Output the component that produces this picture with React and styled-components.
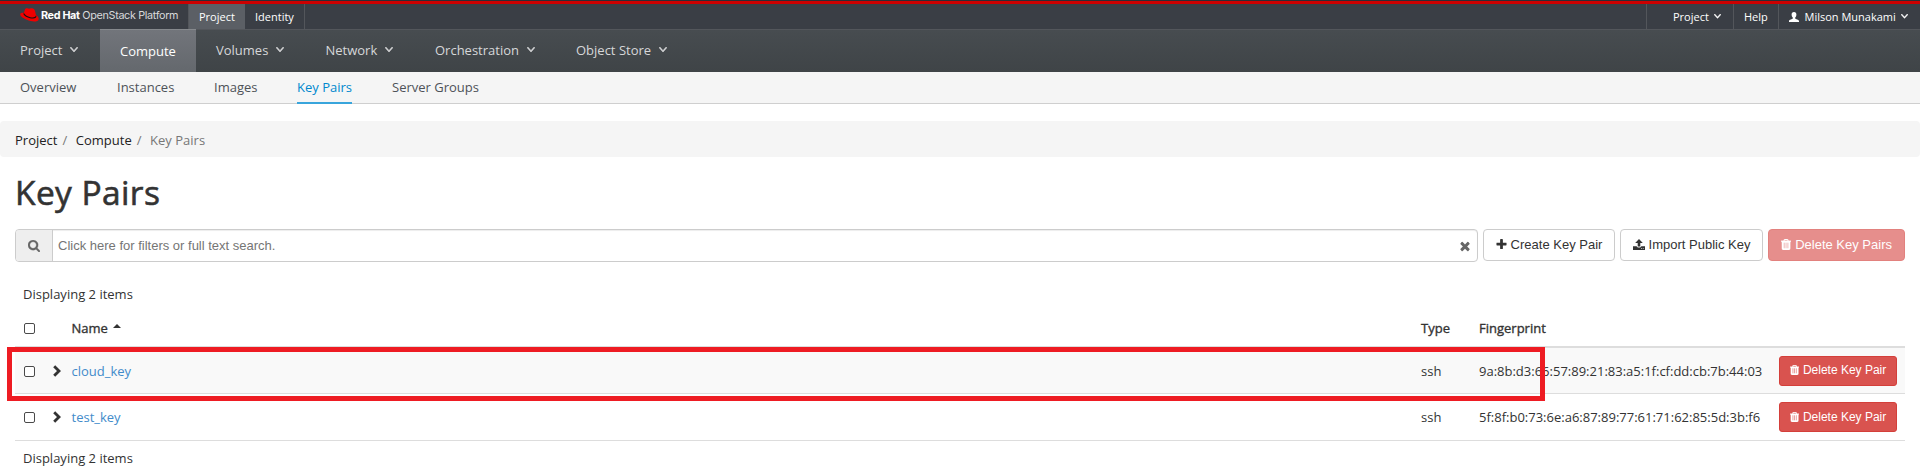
import React from "react";
import styled, { createGlobalStyle } from "styled-components";

const Global = createGlobalStyle`
  * { box-sizing: border-box; }
  body { margin: 0; background: #fff; color: #333; font: 13px/20px "Open Sans", "Noto Sans", sans-serif; overflow: hidden; }
`;

const Page = styled.div`position: relative; height: 473px; overflow: hidden;`;
const RedLine = styled.div`height: 4px; background: #cc0000; border-top: 1px solid #292e34;`;
const TopBar = styled.header`
  display: flex; height: 26px; background: #3a3e45;
  border-bottom: 1px solid #53565b; color: #fff; font-size: 11px;
`;
const Brand = styled.div`display: flex; width: 188px; padding: 4px 0 0 20px; color: #d8d9db;`;
const BrandText = styled.div`
  font: 400 10.8px/15px Inter, sans-serif; margin: 0 0 0 2px; white-space: nowrap; letter-spacing: -0.34px;
  b { font-weight: 700; color: #fff; }
`;
const TopItem = styled.div`
  display: flex; align-items: center; gap: ${(p) => p.$gap || 0}px; width: ${(p) => p.$w}px;
  padding: 0 0 0 ${(p) => p.$pad ?? 10}px; white-space: nowrap; height: 25px;
  background: ${(p) => (p.$active ? "#5b5f65" : "transparent")};
  border-left: ${(p) => (p.$left ? "1px solid #53565b" : "0")};
  border-right: ${(p) => (p.$right ? "1px solid #53565b" : "0")};
`;
const Spacer = styled.div`flex: 1;`;

const MainNav = styled.nav`
  display: flex; height: 42px; color: #d6d7d9;
  background: linear-gradient(#474c50, #3f4447);
`;
const NavItem = styled.div`
  display: flex; align-items: center; gap: 8px; width: ${(p) => p.$w}px; white-space: nowrap;
  padding: 0 0 ${(p) => (p.$active ? 1 : 2)}px 20px;
  color: ${(p) => (p.$active ? "#fff" : "inherit")};
  margin-top: ${(p) => (p.$active ? "-1px" : "0")};
  background: ${(p) => (p.$active ? "linear-gradient(#72757b, #64686d)" : "none")};
  border-top: ${(p) => (p.$active ? "1px solid #86898d" : "0")};
  height: ${(p) => (p.$active ? 43 : 42)}px;
`;
const SubNav = styled.nav`
  display: flex; gap: 40px; height: 32px; padding-left: 20px; background: #f5f5f5;
  border-bottom: 1px solid #cfcfcf; color: #4d5258;
`;
const SubItem = styled.div`
  height: 32px; padding-top: 5px; white-space: nowrap; width: ${(p) => p.$w}px;
  color: ${(p) => (p.$active ? "#0088ce" : "inherit")};
  border-bottom: ${(p) => (p.$active ? "2px solid #39a5dc" : "0")};
`;
const Crumbs = styled.div`
  display: flex; height: 36px; margin-top: 17px; padding: 10px 15px 0; border-radius: 4px;
  background: #f5f5f5; color: #222; line-height: 18px;
  span { color: #777; }
`;
const Slash = styled.span`width: 18.4px; padding-left: 5px;`;
const Title = styled.h1`
  margin: 16px 0 0 15px; font-size: 33.5px; font-weight: 400; line-height: 38px; height: 56px;
  letter-spacing: 0.4px; -webkit-text-stroke: 0.6px #333;
`;
const Toolbar = styled.div`display: flex; gap: 5px; padding: 0 15px; height: 33px;`;
const Search = styled.div`
  display: flex; width: 1463px; height: 33px; border: 1px solid #ccc; border-radius: 4px;
  box-shadow: inset 0 1px 1px rgba(0,0,0,.075); color: #757575; overflow: hidden;
  font: 13px/31px "Liberation Sans", sans-serif;
`;
const SearchIcon = styled.div`
  display: flex; align-items: center; justify-content: center; width: 37px; background: #eee; border-right: 1px solid #ccc; color: #666;
`;
const Placeholder = styled.div`flex: 1; padding-left: 5px;`;
const ClearBox = styled.div`display: flex; align-items: center; padding: 1px 6px 0 0; color: #666;`;
const Button = styled.div`
  display: flex; align-items: center; justify-content: center; gap: 4px;
  width: ${(p) => p.$w}px; height: ${(p) => p.$h || 32}px; border-radius: ${(p) => (p.$small ? 3 : 4)}px;
  padding-bottom: 1px; white-space: nowrap;
  font: ${(p) => (p.$small ? "12px" : "13px")}/18px "Liberation Sans", sans-serif;
  color: ${(p) => (p.$danger ? "#fff" : "#333")};
  background: ${(p) => (p.$danger ? "#d9534f" : "#fff")};
  border: 1px solid ${(p) => (p.$danger ? "#d43f3a" : "#ccc")};
  opacity: ${(p) => (p.$disabled ? 0.65 : 1)};
`;
const Table = styled.section`margin: 0 15px; padding-top: 22px;`;
const Count = styled.div`padding-left: 8px; height: 20px;`;
const Row = styled.div`
  display: grid; align-items: center; height: ${(p) => p.$h}px;
  grid-template-columns: 26px 30.5px 1fr 58px 300px 126px;
  padding-top: ${(p) => (p.$head ? 6 : 0)}px;
  background: ${(p) => (p.$striped ? "#f9f9f9" : "#fff")};
  border-bottom: ${(p) => (p.$head ? 2 : 1)}px solid #ddd;
  -webkit-text-stroke: ${(p) => (p.$head ? "0.35px #333" : "0")};
`;
const Cell = styled.div`white-space: nowrap;`;
const Link = styled.span`color: #428bca;`;
const CheckBox = styled.span`
  display: block; margin: 1px 0 0 9px; width: 11px; height: 11px; border: 1px solid #4a4a4a; border-radius: 2px; background: #fff;
`;
const ArrowWrap = styled.div`padding-left: 11.5px;`;
const Foot = styled(Count)`margin-top: 7px;`;
const Highlight = styled.div`
  position: absolute; left: 7px; top: 347px; width: 1538px; height: 54px; border: 5px solid #ee1c23;
`;
const NameHead = styled.div`display: flex; gap: 5px; align-items: center;`;
const Caret = styled.svg`display: block; margin-top: -5px;`;
const Svg = styled.svg`display: block; flex: none; fill: currentColor;`;

const paths = {
  search: "M1216 832q0-185-131.5-316.5t-316.5-131.5-316.5 131.5-131.5 316.5 131.5 316.5 316.5 131.5 316.5-131.5 131.5-316.5zm512 832q0 52-38 90t-90 38q-54 0-90-38l-343-342q-179 124-399 124-143 0-273.5-55.5t-225-150-150-225-55.5-273.5 55.5-273.5 150-225 225-150 273.5-55.5 273.5 55.5 225 150 150 225 55.5 273.5q0 220-124 399l343 343q37 37 37 90z",
  down: "M1395 736q0 13-10 23l-466 466q-10 10-23 10t-23-10l-466-466q-10-10-10-23t10-23l50-50q10-10 23-10t23 10l393 393 393-393q10-10 23-10t23 10l50 50q10 10 10 23z",
  times: "M1490 1322q0 40-28 68l-136 136q-28 28-68 28t-68-28l-294-294-294 294q-28 28-68 28t-68-28l-136-136q-28-28-28-68t28-68l294-294-294-294q-28-28-28-68t28-68l136-136q28-28 68-28t68 28l294 294 294-294q28-28 68-28t68 28l136 136q28 28 28 68t-28 68l-294 294 294 294q28 28 28 68z",
  plus: "M1600 736v192q0 40-28 68t-68 28h-416v416q0 40-28 68t-68 28h-192q-40 0-68-28t-28-68v-416h-416q-40 0-68-28t-28-68v-192q0-40 28-68t68-28h416v-416q0-40 28-68t68-28h192q40 0 68 28t28 68v416h416q40 0 68 28t28 68z",
  trash: "M704 1376v-704q0-14-9-23t-23-9h-64q-14 0-23 9t-9 23v704q0 14 9 23t23 9h64q14 0 23-9t9-23zm256 0v-704q0-14-9-23t-23-9h-64q-14 0-23 9t-9 23v704q0 14 9 23t23 9h64q14 0 23-9t9-23zm256 0v-704q0-14-9-23t-23-9h-64q-14 0-23 9t-9 23v704q0 14 9 23t23 9h64q14 0 23-9t9-23zm-544-992h448l-48-117q-7-9-17-11h-317q-10 2-17 11zm928 32v64q0 14-9 23t-23 9h-96v948q0 83-47 143.5t-113 60.5h-832q-66 0-113-58.5t-47-141.5v-952h-96q-14 0-23-9t-9-23v-64q0-14 9-23t23-9h309l70-167q15-37 54-63t79-26h320q40 0 79 26t54 63l70 167h309q14 0 23 9t9 23z",
};
const Icon = ({ name, size = 13, box = "128 128 1536 1536", stroke = 0 }) => (
  <Svg width={size} height={size} viewBox={box}><path d={paths[name]} stroke="currentColor" strokeWidth={stroke} /></Svg>
);
const Chevron = ({ w = 8 }) => (
  <Svg width={w} height={w * 0.65} viewBox="384 660 1024 600" preserveAspectRatio="none"><path d={paths.down} stroke="currentColor" strokeWidth="60" /></Svg>
);
const Trash = ({ size = 11 }) => (
  <Svg width={size * 0.92} height={size} viewBox="192 128 1408 1536"><path d={paths.trash} stroke="currentColor" strokeWidth="50" /></Svg>
);
const Upload = () => (
  <Svg width="12" height="11" viewBox="0 0 12 11">
    <path d="M6 0 9.8 4H7.3v3.4H4.7V4H2.2zM0 7.2h3.7c.2.9 1 1.3 2.3 1.3s2.1-.4 2.3-1.3H12V11H0zm8 2.1v.8h.8v-.8zm1.8 0v.8h.8v-.8z" fillRule="evenodd" />
  </Svg>
);
const User = () => (
  <Svg width="10" height="10" viewBox="0 0 10 10">
    <path d="M5 0C3.4 0 2.6 1 2.6 2.5 2.6 4 3.2 5 3.8 5.6v1C3.4 7.3.2 7.6 0 9v1h10V9C9.8 7.6 6.6 7.3 6.2 6.6v-1C6.8 5 7.4 4 7.4 2.5 7.4 1 6.6 0 5 0z" />
  </Svg>
);
const Hat = () => (
  <Svg width="19" height="14" viewBox="0 0 19 14">
    <path fill="#f00000" d="M5 1.5C5.4.3 6.3 0 7.3.3L9 .8 11 .3c2-.5 3.3.5 4 2.6L16 7c1.8 1 3 2.8 2.6 4.4-.5 2-4 2.6-8 1.6C5.5 11.700.2 8.700.2 6.200.2 5 1.800 4.500 3.900 4.700z" />
    <path fill="#111" d="M3.9 4.7C4.5 6.7 8 8.9 11.6 9.4c2.5.3 4.5-.5 4.4-2.400l.4 1.600c-.2 1.600-2.200 2.200-4.900 1.800C7.600 9.800 3.600 7.500 3.500 5.900z" />
  </Svg>
);
const Arrow = () => (
  <Svg width="8" height="12" viewBox="0 0 8 12"><path d="M.2 2.2 2.2.2 8 6 2.2 11.8.2 9.8 4 6z" /></Svg>
);

const rows = [
  { name: "cloud_key", print: "9a:8b:d3:66:57:89:21:83:a5:1f:cf:dd:cb:7b:44:03", striped: true, h: 46 },
  { name: "test_key", print: "5f:8f:b0:73:6e:a6:87:89:77:61:71:62:85:5d:3b:f6", h: 47 },
];

export default function App() {
  return (
    <Page>
      <Global />
      <RedLine />
      <TopBar>
        <Brand><Hat /><BrandText><b>Red Hat</b> OpenStack Platform</BrandText></Brand>
        <TopItem $w={57} $pad={10} $left $active>Project</TopItem>
        <TopItem $w={60} $right>Identity</TopItem>
        <Spacer />
        <TopItem $w={87} $pad={26} $gap={5} $left>Project<Chevron w={7} /></TopItem>
        <TopItem $w={45} $left>Help</TopItem>
        <TopItem $w={142} $gap={5.5} $left><User />Milson Munakami<Chevron w={7} /></TopItem>
      </TopBar>
      <MainNav>
        <NavItem $w={100}>Project<Chevron /></NavItem>
        <NavItem $w={96} $active>Compute</NavItem>
        <NavItem $w={109.5}>Volumes<Chevron /></NavItem>
        <NavItem $w={109.5}>Network<Chevron /></NavItem>
        <NavItem $w={141}>Orchestration<Chevron /></NavItem>
        <NavItem $w={140}>Object Store<Chevron /></NavItem>
      </MainNav>
      <SubNav>
        <SubItem $w={57}>Overview</SubItem>
        <SubItem $w={57}>Instances</SubItem>
        <SubItem $w={43}>Images</SubItem>
        <SubItem $w={55} $active>Key Pairs</SubItem>
        <SubItem $w={90}>Server Groups</SubItem>
      </SubNav>
      <Crumbs>Project<Slash>/</Slash>Compute<Slash>/</Slash><span>Key Pairs</span></Crumbs>
      <Title>Key Pairs</Title>
      <Toolbar>
        <Search>
          <SearchIcon><Icon name="search" size={12} box="64 128 1664 1664" stroke={40} /></SearchIcon>
          <Placeholder>Click here for filters or full text search.</Placeholder>
          <ClearBox><Icon name="times" size={12} /></ClearBox>
        </Search>
        <Button $w={132}><Icon name="plus" size={11} />Create Key Pair</Button>
        <Button $w={143}><Upload />Import Public Key</Button>
        <Button $w={137} $danger $disabled><Trash />Delete Key Pairs</Button>
      </Toolbar>
      <Table>
        <Count>Displaying 2 items</Count>
        <Row $head $h={44}>
          <Cell><CheckBox /></Cell><Cell />
          <NameHead>Name<Caret width="8" height="4"><path d="M0 4 4 0l4 4z" fill="#333" /></Caret></NameHead>
          <Cell>Type</Cell><Cell>Fingerprint</Cell><Cell />
        </Row>
        {rows.map((r) => (
          <Row key={r.name} $h={r.h} $striped={r.striped}>
            <Cell><CheckBox /></Cell><ArrowWrap><Arrow /></ArrowWrap>
            <Cell><Link>{r.name}</Link></Cell>
            <Cell>ssh</Cell><Cell>{r.print}</Cell>
            <Cell><Button $w={118} $h={30} $small $danger><Trash size={10} />Delete Key Pair</Button></Cell>
          </Row>
        ))}
        <Foot>Displaying 2 items</Foot>
      </Table>
      <Highlight />
    </Page>
  );
}
